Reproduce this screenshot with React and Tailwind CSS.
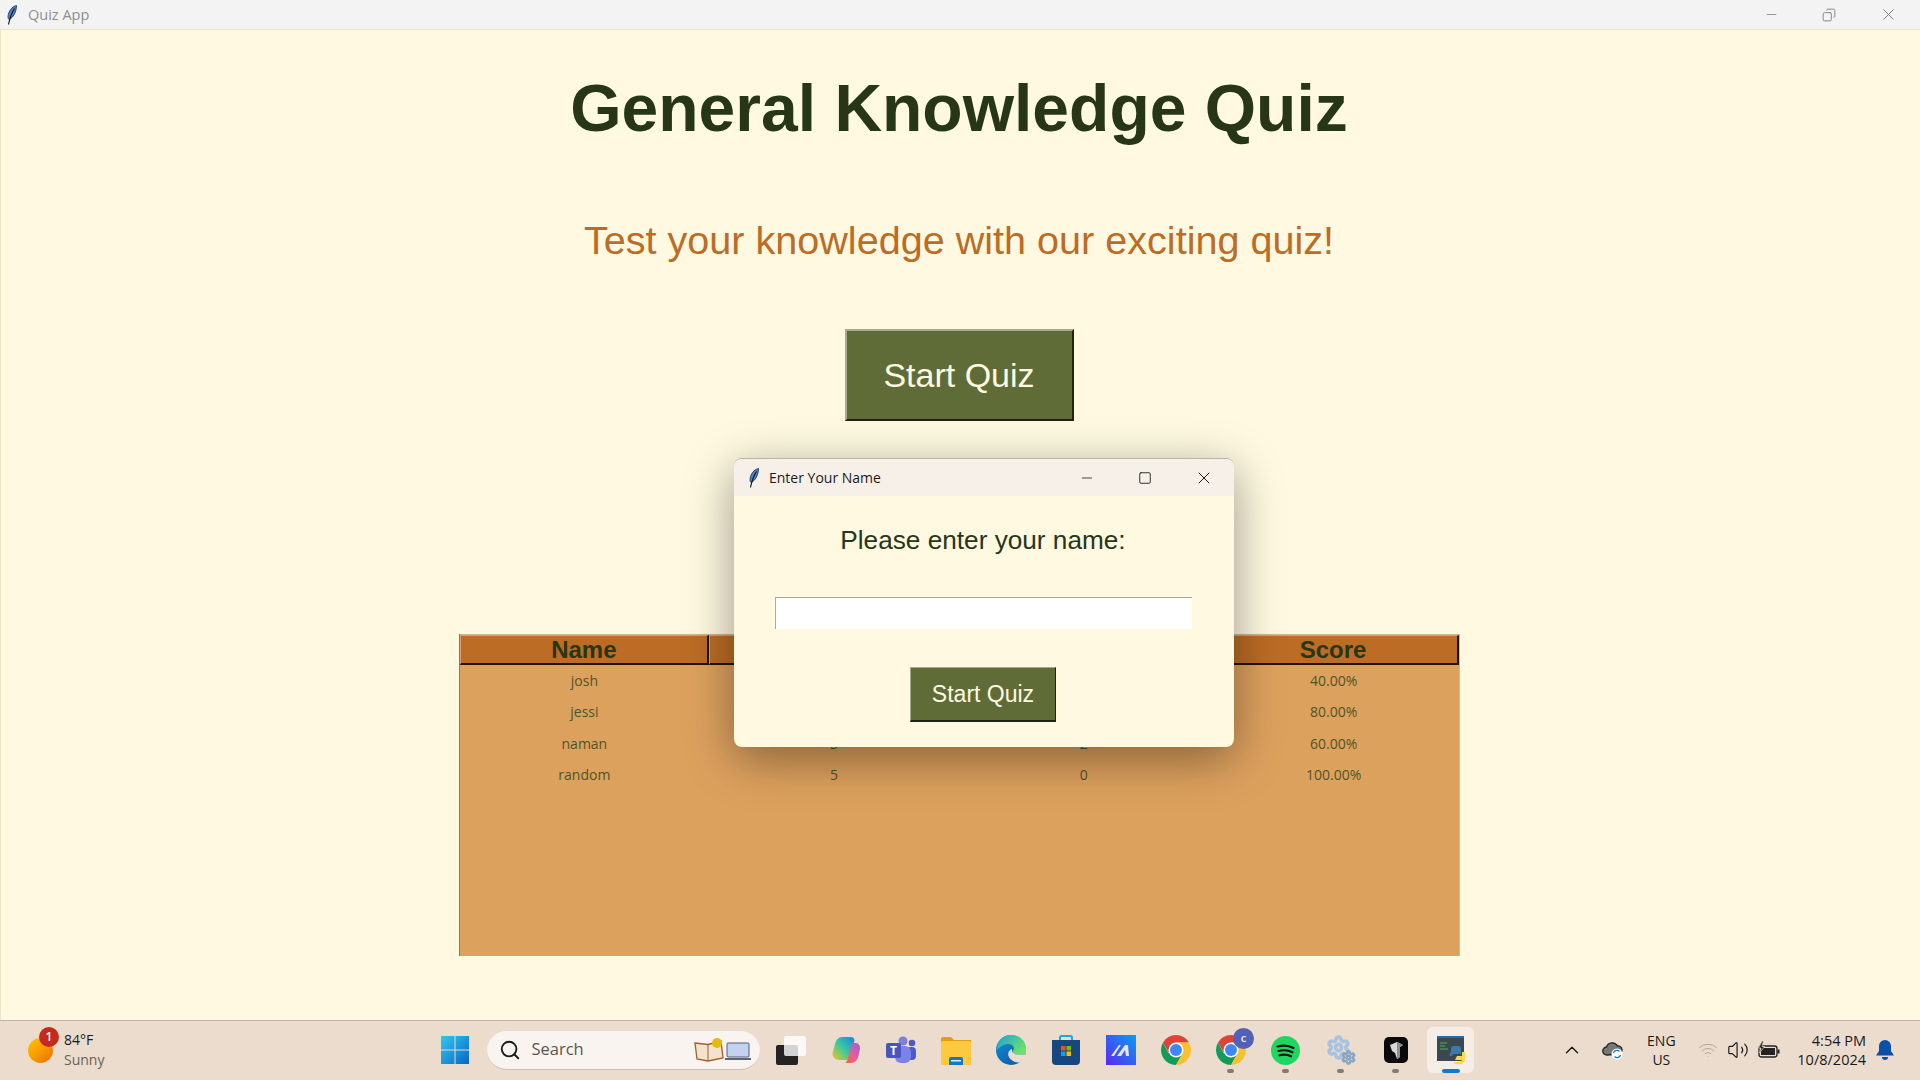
import { ChevronUp, Search, Volume2, Wifi, Settings, Minus, Square, X, Copy } from "lucide-react";

const rows = [
  ["josh", "2", "3", "40.00%"],
  ["jessi", "4", "1", "80.00%"],
  ["naman", "3", "2", "60.00%"],
  ["random", "5", "0", "100.00%"],
];

const Feather = ({ className }) => (
  <svg viewBox="0 0 12 20" className={className}>
    <path d="M10.5 0.5C6 1.5 2.5 6 2 11.5c0 1.500 0.400 2.500 1 3C7 13 10.500 7 10.500 0.500z" fill="#4c83cf" stroke="#1d2b44" strokeWidth="0.8" />
    <path d="M8.500 3.500C6 7.500 4 12 2.500 19.500" fill="none" stroke="#111" strokeWidth="1.100" />
  </svg>
);

const Chrome = ({ className }) => (
  <svg viewBox="4 4 40 40" className={className}>
    <path d="M24 4 A20 20 0 0 1 41.320 14 H24 L14 27 L6.680 14 A20 20 0 0 1 24 4z" fill="#db4437" />
    <path d="M6.680 14 A20 20 0 0 0 24 44 L33 28 L14 28z" fill="#0f9d58" />
    <path d="M41.320 14 A20 20 0 0 1 24 44 L33 28 L24 14z" fill="#fbc02d" />
    <circle cx="24" cy="24" r="10" fill="#fff" />
    <circle cx="24" cy="24" r="8" fill="#4285f4" />
  </svg>
);

function TaskIcon({ children, dot, active }) {
  return (
    <div className={`relative flex h-[46px] items-center justify-center rounded-md ${active ? "mx-[4px] w-[47px] bg-[#f6eee6]" : "w-[55px]"}`}>
      {children}
      {dot && <div className="absolute bottom-0 h-[4px] w-[7px] rounded-full bg-[#857b74]" />}
      {active && <div className="absolute bottom-0 h-[4px] w-[18px] rounded-full bg-[#0f7bd0]" />}
    </div>
  );
}

export default function App() {
  return (
    <div className="relative flex h-screen w-full flex-col overflow-hidden bg-[#fef9e0] font-['Liberation_Sans',sans-serif]">
      {/* title bar */}
      <div className="flex h-[29px] shrink-0 items-center bg-[#f3f3f3] pl-[6px]">
        <Feather className="h-[20px] w-[12px]" />
        <span className="ml-[10px] font-['Open_Sans',sans-serif] text-[14.500px] text-[#8f8f8f]">Quiz App</span>
        <div className="ml-auto mr-[2px] flex items-center text-[#7a7a7a]">
          <div className="flex w-[58px] justify-center"><Minus size={15} strokeWidth={1.200} /></div>
          <div className="flex w-[58px] justify-center"><Copy size={14} strokeWidth={1.500} className="-scale-x-100" /></div>
          <div className="flex w-[60px] justify-center"><X size={19} strokeWidth={1.200} /></div>
        </div>
      </div>

      {/* main window */}
      <main className="flex min-h-0 flex-1 flex-col items-center border-t border-[#ebe4c6] pr-[2px] shadow-[inset_1px_0_0_#ebe4c6]">
        <h1 className="mt-[40px] text-[66px] font-bold leading-[76px] text-[#283618]">General Knowledge Quiz</h1>
        <p className="mt-[71px] text-[39.600px] leading-[46px] text-[#bc6c25]">Test your knowledge with our exciting quiz!</p>
        <button className="mt-[66px] h-[92px] w-[229px] border-2 border-[#a6ac8b] border-r-[#1e2410] border-b-[#1e2410] bg-[#606c38] text-[34px] text-[#fefae0]">
          Start Quiz
        </button>
        <div className="mt-[213px] flex h-[322px] w-[1001px] flex-col border-l border-r border-[#98784f] border-r-[#e6b67a] bg-[#dda15e]">
          <div className="grid h-[31px] grid-cols-4 border-t border-[#c9b58e]">
            {["Name", "Correct", "Incorrect", "Score"].map((h) => (
              <div key={h} className="flex items-center justify-center border-l border-t border-[#e39a6b] border-r-2 border-r-[#1c1508] border-b-2 border-b-[#1c1508] bg-[#bc6c25] text-[24px] font-bold leading-none text-[#283618]">
                {h}
              </div>
            ))}
          </div>
          {rows.map((r) => (
            <div key={r[0]} className="grid h-[31.300px] grid-cols-4 items-center text-center font-['Open_Sans',sans-serif] text-[14px] text-[#4e5429]">
              {r.map((c, i) => (
                <div key={i}>{c}</div>
              ))}
            </div>
          ))}
        </div>
      </main>

      {/* taskbar */}
      <footer className="relative flex h-[60px] shrink-0 items-center border-t border-[#bdb5a8] bg-[#ecdccd] font-['Open_Sans',sans-serif] text-[14px] text-[#1a1a1a]">
        <div className="relative ml-[28px] h-[25px] w-[25px] rounded-full bg-gradient-to-br from-[#ffc800] to-[#eb6a00]">
          <div className="absolute -right-[6px] -top-[11px] flex h-[20px] w-[20px] items-center justify-center rounded-full bg-[#c42b1c] text-[12px] font-semibold text-white">1</div>
        </div>
        <div className="ml-[11px] flex flex-col pb-[2px] leading-[20px]">
          <span>84°F</span>
          <span className="text-[#6a625b]">Sunny</span>
        </div>

        <div className="ml-[336px] flex items-center pb-[1px]">
          <svg viewBox="0 0 30 30" className="h-[30px] w-[30px]">
            <defs>
              <linearGradient id="win" x1="0" y1="0" x2="1" y2="1">
                <stop offset="0" stopColor="#35c6f4" />
                <stop offset="1" stopColor="#0569c4" />
              </linearGradient>
            </defs>
            <path d="M1 1h13.500v13.500H1zM15.500 1H29v13.500H15.500zM1 15.500h13.500V29H1zM15.500 15.500H29V29H15.500z" fill="url(#win)" />
          </svg>
          <div className="ml-[17px] flex h-[39px] w-[273px] items-center rounded-full border-b border-[#cdbfb2] bg-[#f9f4ef] pl-[12px]">
            <Search size={22} strokeWidth={2} className="text-[#1a1a1a]" />
            <span className="ml-[10px] text-[16.500px] text-[#5c5650]">Search</span>
            <svg viewBox="0 0 58 24" className="ml-auto mr-[8px] h-[24px] w-[58px]">
              <path d="M1 5l13 1.500L27 3l2 17-15 3-11-2z" fill="#f2e3cd" stroke="#a85c32" strokeWidth="1.300" />
              <path d="M14 6.500V23" stroke="#a85c32" />
              <circle cx="23" cy="5" r="5" fill="#e8b90f" />
              <rect x="33" y="5" width="22" height="14" rx="1" fill="#c3d2ee" stroke="#555f78" />
              <path d="M31 20h26v2H31z" fill="#5d6477" />
            </svg>
          </div>

          <div className="ml-[3px] flex items-center">
            <TaskIcon>
              <div className="relative h-[29px] w-[30px]">
                <div className="absolute bottom-0 left-0 h-[20px] w-[22px] rounded-[2px] bg-[#232323]" />
                <div className="absolute right-0 top-0 h-[20px] w-[22px] rounded-[2px] bg-white/80" />
              </div>
            </TaskIcon>
            <TaskIcon>
              <svg viewBox="0 0 30 28" className="h-[28px] w-[30px]">
                <defs>
                  <linearGradient id="cop1" x1="0" y1="1" x2="1" y2="0">
                    <stop offset="0" stopColor="#f9c51e" />
                    <stop offset="0.5" stopColor="#38c9a0" />
                    <stop offset="1" stopColor="#1d80e2" />
                  </linearGradient>
                  <linearGradient id="cop2" x1="1" y1="0" x2="0" y2="1">
                    <stop offset="0" stopColor="#9b5fe0" />
                    <stop offset="0.6" stopColor="#ef5d8f" />
                    <stop offset="1" stopColor="#f7632f" />
                  </linearGradient>
                </defs>
                <path d="M11 1h9c2 0 3 1 3.500 3L21 19c-0.500 3-2 5-5 5H8C4 24 1 20.500 1.500 17L4 8c1-4 3.500-7 7-7z" fill="url(#cop1)" />
                <path d="M14 27h6c4 0 6.500-3 7.500-7l1.500-7c0.500-3-1.500-6-4-6h-4l-4 15c-0.500 2-1.500 4-2.500 5z" fill="url(#cop2)" />
              </svg>
            </TaskIcon>
            <TaskIcon>
              <svg viewBox="0 0 30 28" className="h-[28px] w-[30px]">
                <circle cx="17" cy="5" r="4.500" fill="#7b83d0" />
                <circle cx="26" cy="7" r="3.300" fill="#5059c9" />
                <rect x="21" y="11" width="9" height="13" rx="4" fill="#5059c9" />
                <rect x="9" y="10" width="16" height="17" rx="6" fill="#7b83eb" />
                <rect x="0" y="7" width="15" height="15" rx="2" fill="#4b53bc" />
                <text x="7.500" y="19" textAnchor="middle" fontSize="12" fontWeight="700" fill="#fff">T</text>
              </svg>
            </TaskIcon>
            <TaskIcon>
              <svg viewBox="0 0 30 29" className="h-[29px] w-[30px]">
                <path d="M0 3a2 2 0 0 1 2-2h8l3 3h17v6H0z" fill="#e0a100" />
                <rect x="0" y="5" width="30" height="24" rx="1.500" fill="#fcc93f" />
                <path d="M8 23a2 2 0 0 1 2-2h10a2 2 0 0 1 2 2v6H8z" fill="#1479c4" />
                <rect x="10" y="24" width="10" height="1.500" fill="#d8ecf8" />
              </svg>
            </TaskIcon>
            <TaskIcon>
              <svg viewBox="0 0 30 30" className="h-[30px] w-[30px]">
                <defs>
                  <linearGradient id="edge1" x1="0" y1="0" x2="1" y2="0.600">
                    <stop offset="0" stopColor="#1aa3d8" />
                    <stop offset="1" stopColor="#6fe06a" />
                  </linearGradient>
                  <linearGradient id="edge2" x1="0" y1="0" x2="0.600" y2="1">
                    <stop offset="0" stopColor="#1691d8" />
                    <stop offset="1" stopColor="#0c5fa8" />
                  </linearGradient>
                </defs>
                <circle cx="15" cy="15" r="15" fill="url(#edge2)" />
                <path d="M30 19.500H18c-1.500 0-2-1.500-1.500-3 .5-1 1.500-2 1.500-3.500-.5-3-4-4.500-7-4-4 .5-7.500 3-10 6C1 6 7 0 15 0c8.500 0 15 6 15 14z" fill="url(#edge1)" />
                <path d="M30 19.500c-1 3.500-3.500 6.500-6.500 8C19 28 14 25 12.500 21c-1-3 .5-6 3.500-7-.5 3 1 5.500 5 5.500z" fill="#ecdccd" />
              </svg>
            </TaskIcon>
            <TaskIcon>
              <svg viewBox="0 0 28 30" className="h-[30px] w-[28px]">
                <path d="M8 6V2.500A1.500 1.500 0 0 1 9.500 1h9A1.500 1.500 0 0 1 20 2.500V6" fill="none" stroke="#22a6e0" strokeWidth="2" />
                <path d="M0 5h28v21a4 4 0 0 1-4 4H4a4 4 0 0 1-4-4z" fill="#17477f" />
                <rect x="9" y="11" width="4.500" height="4.500" fill="#f25022" />
                <rect x="14.500" y="11" width="4.500" height="4.500" fill="#7fba00" />
                <rect x="9" y="16.500" width="4.500" height="4.500" fill="#00a4ef" />
                <rect x="14.500" y="16.500" width="4.500" height="4.500" fill="#ffb900" />
              </svg>
            </TaskIcon>
            <TaskIcon>
              <svg viewBox="0 0 30 30" className="h-[30px] w-[30px]">
                <defs>
                  <linearGradient id="tile" x1="0" y1="1" x2="1" y2="0">
                    <stop offset="0" stopColor="#5a28f0" />
                    <stop offset="1" stopColor="#0a9cf5" />
                  </linearGradient>
                </defs>
                <rect width="30" height="30" fill="url(#tile)" />
                <path d="M5 21l8-11h2l-7 11zM11 21l8-11h3l1 11h-3l-1-6-4 6z" fill="#e6e3fb" />
              </svg>
            </TaskIcon>
            <TaskIcon>
              <Chrome className="h-[30px] w-[30px]" />
            </TaskIcon>
            <TaskIcon dot>
              <div className="relative">
                <Chrome className="h-[30px] w-[30px]" />
                <div className="absolute -right-[8px] -top-[7px] flex h-[21px] w-[21px] items-center justify-center rounded-full bg-[#5260b8] text-[11px] font-semibold text-[#e8e8f5]">c</div>
              </div>
            </TaskIcon>
            <TaskIcon dot>
              <svg viewBox="0 0 29 29" className="h-[29px] w-[29px]">
                <circle cx="14.500" cy="14.500" r="14.500" fill="#1ed760" />
                <path d="M6.500 10.500c5.500-1.500 11.500-1 16 1.500M7.500 15c4.500-1.200 10-.8 14 1.300M8.500 19.300c4-1 8-.7 11.500 1" fill="none" stroke="#111" strokeWidth="2.200" strokeLinecap="round" />
              </svg>
            </TaskIcon>
            <TaskIcon dot>
              <div className="relative h-[30px] w-[30px]">
                <Settings size={25} strokeWidth={3.500} className="absolute left-0 top-0 text-[#a9c2e0]" />
                <Settings size={15} strokeWidth={4} className="absolute bottom-0 right-0 text-[#8aa5c2]" />
              </div>
            </TaskIcon>
            <TaskIcon dot>
              <svg viewBox="0 0 24 26" className="h-[26px] w-[24px]">
                <rect width="24" height="26" rx="5" fill="#0a0a0a" />
                <path d="M6 8l7-3 6 3-3 2v10l-3 2-2-6-3-2z" fill="#d8d8d8" />
                <path d="M13 5l6 3-3 2v10l-3 2z" fill="#8e8e8e" />
              </svg>
            </TaskIcon>
            <TaskIcon active>
              <svg viewBox="0 0 28 30" className="h-[30px] w-[28px]">
                <rect x="0" y="1" width="27" height="25" fill="#3b4852" />
                <rect x="0" y="1" width="27" height="2" fill="#1d6fb0" />
                <path d="M3 8h7M3 11h5M3 14h8" stroke="#4cb050" strokeWidth="1" />
                <path d="M14 17v-3a3 3 0 0 1 3-3h4a3 3 0 0 1 3 3v5h-7a2 2 0 0 0-2 2h-2a3 3 0 0 1 1-4z" fill="#3c78aa" />
                <path d="M17 27h5a3 3 0 0 0 3-3v-7h3v6a5 5 0 0 1-5 6h-6z" fill="#ffd845" />
                <path d="M20 21h8v4h-10z" fill="#ffd845" />
              </svg>
            </TaskIcon>
          </div>
        </div>

        {/* tray */}
        <div className="absolute right-0 top-0 flex h-full items-center pb-[2px]">
          <ChevronUp size={22} strokeWidth={1.500} className="text-[#1a1a1a]" />
          <svg viewBox="0 0 22 20" className="ml-[19px] h-[20px] w-[22px]">
            <path d="M5 15a4 4 0 0 1-.5-8 6 6 0 0 1 11-1 4 4 0 0 1 1 8z" fill="#777" stroke="#222" strokeWidth="1.300" />
            <circle cx="15" cy="14" r="5.500" fill="#fff" />
            <path d="M11.500 13a3.500 3.500 0 0 1 6-1.500M18.500 15a3.500 3.500 0 0 1-6 1.500" fill="none" stroke="#0f7bd0" strokeWidth="1.300" />
          </svg>
          <div className="ml-[17px] flex w-[40px] flex-col items-center leading-[19px]">
            <span>ENG</span>
            <span>US</span>
          </div>
          <Wifi size={20} strokeWidth={1} className="ml-[17px] text-[#a49b92]" />
          <Volume2 size={22} strokeWidth={1.300} className="ml-[9px] text-[#1a1a1a]" />
          <svg viewBox="0 0 24 18" className="ml-[7px] h-[20px] w-[24px]">
            <rect x="3" y="5" width="18" height="11" rx="2.500" fill="none" stroke="#222" strokeWidth="1.300" />
            <rect x="5" y="7" width="14" height="7" fill="#222" />
            <rect x="21.500" y="8.500" width="2" height="4" fill="#222" />
            <path d="M6 0L2.500 7h2.500L3.500 12 8.500 5.500H6L7.500 0z" fill="#222" stroke="#ecdccd" strokeWidth="0.700" />
          </svg>
          <div className="ml-[17px] flex flex-col items-end text-[14.500px] leading-[19px]">
            <span>4:54 PM</span>
            <span>10/8/2024</span>
          </div>
          <svg viewBox="0 0 20 22" className="ml-[9px] mr-[25px] h-[22px] w-[20px]">
            <path d="M10 1a6 6 0 0 0-6 6v5l-3 4.500h18L16 12V7a6 6 0 0 0-6-6z" fill="#0a4fa8" />
            <path d="M7 18a3 3 0 0 0 6 0z" fill="#0a4fa8" />
          </svg>
        </div>
      </footer>

      {/* dialog window */}
      <div className="absolute left-[734px] top-[458px] flex h-[289px] w-[500px] flex-col overflow-hidden rounded-[8px] border-t border-[#b9b5a4] bg-[#fef9e0] shadow-[0_12px_48px_rgba(0,0,0,0.4)]">
        <div className="flex h-[37px] shrink-0 items-center bg-[#f7f0e8] pl-[14px]">
          <Feather className="h-[20px] w-[12px]" />
          <span className="ml-[9px] font-['Open_Sans',sans-serif] text-[14px] text-[#1a1a1a]">Enter Your Name</span>
          <div className="ml-auto flex items-center text-[#1a1a1a]">
            <div className="flex w-[58px] justify-center"><Minus size={16} strokeWidth={1.200} /></div>
            <div className="flex w-[58px] justify-center"><Square size={14} strokeWidth={1.500} /></div>
            <div className="flex w-[60px] justify-center"><X size={20} strokeWidth={1.200} /></div>
          </div>
        </div>
        <div className="flex flex-1 flex-col items-center pr-[2px]">
          <p className="mt-[30px] text-[26.200px] leading-[29px] text-[#283618]">Please enter your name:</p>
          <input className="mt-[42px] h-[32px] w-[417px] border-l border-t border-[#a9a9a9] bg-white outline-none" />
          <button className="mt-[38px] h-[55px] w-[146px] border border-[#a6ac8b] border-r-[#1e2410] border-b-2 border-b-[#1e2410] bg-[#606c38] text-[23px] text-[#fefae0]">
            Start Quiz
          </button>
        </div>
      </div>
    </div>
  );
}
